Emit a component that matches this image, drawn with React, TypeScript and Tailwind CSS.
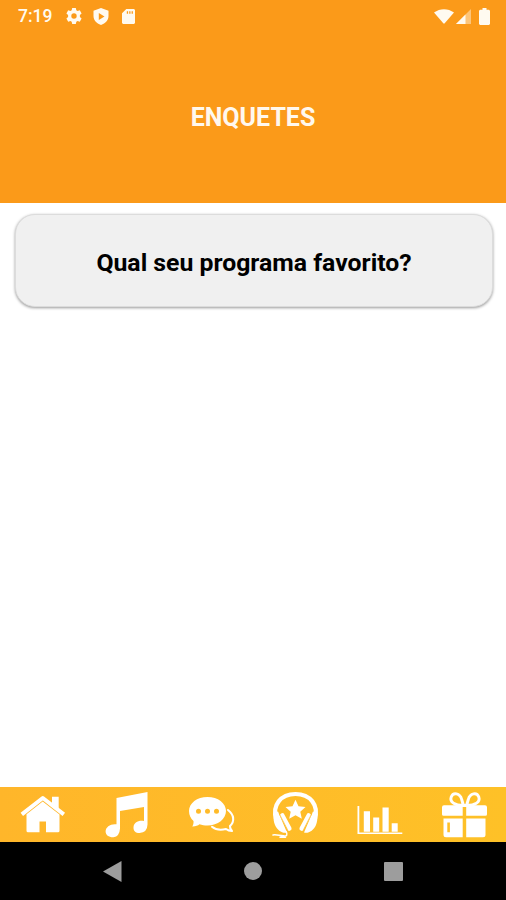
import type { ReactNode } from 'react';

function StatusBar() {
  return (
    <div className="flex h-8 items-center justify-between pr-4 pl-[18px] text-[#fffaf0]">
      <div className="flex items-center">
        <span className="w-[48px] text-[17.5px] leading-8 font-medium">7:19</span>
        <svg className="size-4" viewBox="0 0 16 16" fill="currentColor">
          <path
            fillRule="evenodd"
            d="M6.2 0h3.6l.5 2.3 1.3.8 2.2-.8 1.8 3.1-1.7 1.6v2l1.7 1.6-1.8 3.1-2.2-.8-1.3.8-.5 2.3H6.2l-.5-2.3-1.3-.8-2.2.8-1.8-3.1L2.1 9V7L.4 5.4l1.8-3.1 2.2.8 1.3-.8zM8 5.3a2.700 2.700 0 1 0 0 5.400 2.700 2.700 0 0 0 0-5.400z"
          />
        </svg>
        <svg className="ml-[11px] h-[17px] w-4" viewBox="0 0 16 17" fill="currentColor">
          <path fillRule="evenodd" d="M8 0l7.500 2.800V8c0 4-3 7.500-7.500 9C3.500 15.500.5 12 .5 8V2.800zM5.800 5v7l5.700-3.500z" />
        </svg>
        <svg className="ml-[13px] h-[15px] w-[13px]" viewBox="0 0 13 15" fill="currentColor">
          <path fillRule="evenodd" d="M4.300 0H12l1 1v13l-1 1H1l-1-1V4.300zM4.800 2.200v2.600h1.300V2.200zm2.400 0v2.600h1.300V2.200zm2.400 0v2.600h1.300V2.200z" />
        </svg>
      </div>
      <div className="flex items-center">
        <svg className="h-[15px] w-5" viewBox="0 0 20 15" fill="currentColor">
          <path d="M0 3.500C6-1 14-1 20 3.500L10.700 14.300q-.7.700-1.400 0z" />
        </svg>
        <svg className="ml-[2px] h-[15px] w-[15px]" viewBox="0 0 15 15" fill="currentColor">
          <path d="M15 0v15H0z" opacity=".45" />
          <path d="M9.500 5.500V15H0z" />
        </svg>
        <svg className="ml-[8px] h-[17px] w-[11px]" viewBox="0 0 11 17" fill="currentColor">
          <path d="M3.500 0h4v1.700H10l1 1V16l-1 1H1l-1-1V2.700l1-1h2.500z" />
        </svg>
      </div>
    </div>
  );
}

function TabIcon({ children }: { children: ReactNode }) {
  return (
    <svg className="size-[46px] overflow-visible" viewBox="0 0 46 46" fill="currentColor">
      {children}
    </svg>
  );
}

function HomeIcon() {
  return (
    <TabIcon>
      <path d="M33 4.800h6.700v12L33 11.500z" />
      <path d="M2.800 22.300L23.800 6l21 16.300" fill="none" stroke="currentColor" strokeWidth="4" strokeLinejoin="round" />
      <path d="M23.700 9.600L40.500 22.600v16.100q0 1.500-1.500 1.500H27V29.500h-6.500v10.700H9q-1.500 0-1.500-1.500V22.300z" />
    </TabIcon>
  );
}

function MusicIcon() {
  return (
    <TabIcon>
      <path d="M13.500 6L44.500 0v32.500q-.2 8-8 8.500c-4 0-6.200-2.200-6-5.800.3-4.200 4.500-7.200 10.500-6.200V15L17 19v17.500q-.5 8-6.500 8.800c-4.500.2-8-2-7.900-6 .1-4.300 5-7.800 10.900-7z" />
    </TabIcon>
  );
}

function ChatIcon() {
  return (
    <TabIcon>
      <path
        fillRule="evenodd"
        d="M19.500 5C30 5 38 11.200 38 19s-8 14.500-18.500 14.500c-3 0-5.500-.4-8-1.200C9.800 33.700 7.500 34.600 4.300 34.500c1-1.700 1.400-3.300 1.200-5.500C2.700 26.500 1 23 1 19 1 11.200 9 5 19.500 5zM10.500 16.700a2.500 2.500 0 1 0 0 5 2.500 2.500 0 0 0 0-5zm9 0a2.500 2.500 0 1 0 0 5 2.500 2.500 0 0 0 0-5zm9 0a2.500 2.500 0 1 0 0 5 2.500 2.500 0 0 0 0-5z"
      />
      <path
        d="M40 18c6 4.500 7 11.500 2 16-.2 2 .5 3.500 2 5-2.500 0-4.500-.8-6-2-5 1.300-10.500.6-14-2.200"
        fill="none"
        stroke="currentColor"
        strokeWidth="2.100"
        strokeLinecap="round"
        strokeLinejoin="round"
      />
    </TabIcon>
  );
}

function HeadphonesIcon() {
  return (
    <TabIcon>
      <path d="M4.300 28C-.5 13 9 2 23.500 2s24 11 19.200 26" fill="none" stroke="currentColor" strokeWidth="4.200" />
      <path d="M6 19.500C1 20.500.7 27 3 33c2.500 5.500 7.500 8.800 12 7.500zM41 19.500c5 1 5.300 7.500 3 13.500-2.500 5.500-7.500 8.800-12 7.500z" />
      <path d="M10.300 23.500l7 13M36.700 23.500l-7 13" fill="none" stroke="currentColor" strokeWidth="4.600" strokeLinecap="round" />
      <path d="M7.300 21.800l8.200 16M39.700 21.800l-8.200 16" fill="none" stroke="#fdbc29" strokeWidth=".8" />
      <path d="M23.500 7.800l3 6.400 7 .8-5.200 4.700 1.500 7-6.300-3.500-6.300 3.500 1.500-7L13.500 15l7-.8z" />
      <path d="M14 39.500c2 3 .8 5-2.500 4.700M1 43c4-.7 7 1 11 .8M8 45.300h5.500" fill="none" stroke="currentColor" strokeWidth="1.500" strokeLinecap="round" />
    </TabIcon>
  );
}

function ChartIcon() {
  return (
    <TabIcon>
      <path d="M1.500 14h1.800v26.500h43V42H1.500z" />
      <path d="M7.800 19.300h6.200v20.500H7.800zM17.200 25.500h6v14.300h-6zM26.500 15.500h6.200v24.300h-6.200zM35.700 31.200h6v8.600h-6z" />
    </TabIcon>
  );
}

function GiftIcon() {
  return (
    <TabIcon>
      <path
        d="M22 13.500C14 13.500 8.500 10 10.200 5 12 0 19 .8 20.700 7.500l1.800 6M26 13.500C34 13.500 39.500 10 37.800 5 36 0 29 .8 27.300 7.500l-1.800 6"
        fill="none"
        stroke="currentColor"
        strokeWidth="2.900"
      />
      <path d="M3 13.300h18.700v10.500H2.500q-1.500 0-1.500-1.500v-7q0-2 2-2zM25.200 13.300H44q2 0 2 2v7q0 1.500-1.500 1.500H25.200z" />
      <path
        fillRule="evenodd"
        d="M2.500 26.500h19.200v18.700H5q-2.500 0-2.500-2.500zM6.300 30.500v9.800h2.600v-9.800zM25.200 26.500h19.300v16.200q0 2.500-2.500 2.500H25.200z"
      />
      <path d="M20.500 12h6v3h-6z" />
    </TabIcon>
  );
}

const tabs = [
  { label: 'Início', icon: <HomeIcon /> },
  { label: 'Música', icon: <MusicIcon /> },
  { label: 'Chat', icon: <ChatIcon /> },
  { label: 'Programação', icon: <HeadphonesIcon /> },
  { label: 'Enquetes', icon: <ChartIcon /> },
  { label: 'Promoções', icon: <GiftIcon /> }
];

export default function App() {
  return (
    <div className="flex h-[900px] w-[506px] flex-col bg-white font-['Roboto',sans-serif]">
      <header className="flex h-[203px] flex-col bg-[#fb9a19]">
        <StatusBar />
        <h1 className="mt-[70px] text-center text-[25px] leading-8 font-bold text-[#fff8ee]">ENQUETES</h1>
      </header>

      <main className="flex-1 pt-[11px] pr-[13px] pl-[15px]">
        <button
          type="button"
          className="flex h-[93px] w-full items-center justify-center rounded-[20px] border border-[#dcdcdc] bg-[#f0f0f0] pt-1 text-[24.8px] font-bold text-black shadow-[0_1px_3px_rgba(0,0,0,0.4)]"
        >
          Qual seu programa favorito?
        </button>
      </main>

      <nav className="grid h-[55px] grid-cols-6 bg-linear-to-r from-[#ffb62a] to-[#fec127] text-white">
        {tabs.map((tab) => (
          <button key={tab.label} type="button" aria-label={tab.label} className="flex items-center justify-center">
            {tab.icon}
          </button>
        ))}
      </nav>

      <div className="flex h-[58px] items-center justify-between bg-black pr-[103px] pl-[102px] text-[#9d9d9d]">
        <svg className="h-[21px] w-5" viewBox="0 0 20 21" fill="currentColor">
          <path d="M19.500 0v21L1 10.500z" />
        </svg>
        <span className="size-[18px] rounded-full bg-[#9d9d9d]" />
        <span className="size-[19px] rounded-[1px] bg-[#9d9d9d]" />
      </div>
    </div>
  );
}
